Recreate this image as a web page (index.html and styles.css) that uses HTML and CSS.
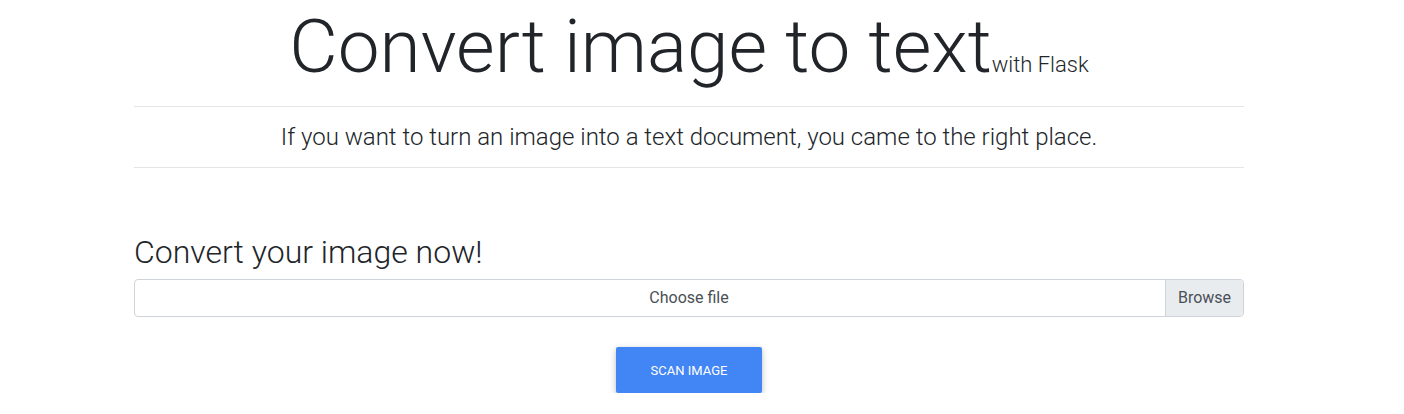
FILE: index.html
```html
<!DOCTYPE html>
<html lang="en">
<head>
<meta charset="utf-8">
<title>Convert image to text</title>
<link rel="stylesheet" href="styles.css">
</head>
<body>
<main class="container">
  <header class="intro">
    <h1 class="title">Convert image to text<small class="title-sub">with Flask</small></h1>
    <hr class="rule">
    <p class="lead">If you want to turn an image into a text document, you came to the right place.</p>
    <hr class="rule">
  </header>
  <section class="convert">
    <h3 class="convert-heading">Convert your image now!</h3>
    <div class="file-input">
      <span class="file-label">Choose file</span>
      <span class="file-browse">Browse</span>
    </div>
    <div class="actions">
      <button class="btn-scan" type="button">Scan image</button>
    </div>
  </section>
</main>
</body>
</html>
```
FILE: styles.css
```css
* { box-sizing: border-box; }
html, body { margin: 0; padding: 0; }
body {
  font-family: Roboto, "Liberation Sans", sans-serif;
  color: #212529;
  background: #fff;
}
.container {
  width: 1110px;
  margin-left: 134px;
}
.intro { text-align: center; }
.title {
  margin: 0 0 13px;
  font-size: 74.7px;
  font-weight: 300;
  line-height: 93px;
}
.title-sub {
  font-size: 22px;
  font-weight: 300;
  line-height: 1;
}
.rule {
  margin: 0;
  border: 0;
  border-top: 1px solid rgba(0,0,0,.1);
}
.lead {
  margin: 0;
  height: 60px;
  line-height: 60px;
  font-size: 24px;
  font-weight: 300;
}
.convert { padding-top: 64px; }
.convert-heading {
  margin: 0 0 7px;
  font-size: 32px;
  font-weight: 300;
  line-height: 40px;
}
.file-input {
  position: relative;
  height: 38px;
  border: 1px solid #ced4da;
  border-radius: 4px;
  font-size: 16px;
  color: #495057;
  overflow: hidden;
}
.file-label {
  display: block;
  text-align: center;
  line-height: 36px;
}
.file-browse {
  position: absolute;
  top: 0;
  right: 0;
  bottom: 0;
  width: 78px;
  text-align: center;
  line-height: 36px;
  background: #e9ecef;
  border-left: 1px solid #ced4da;
}
.actions {
  display: flex;
  justify-content: center;
  padding-top: 30px;
}
.btn-scan {
  width: 146px;
  height: 46px;
  border: 0;
  border-radius: 2px;
  background: #4285f4;
  color: #fff;
  font-family: Roboto, "Liberation Sans", sans-serif;
  font-size: 13px;
  text-transform: uppercase;
  box-shadow: 0 2px 5px 0 rgba(0,0,0,.16), 0 2px 10px 0 rgba(0,0,0,.12);
}
```
